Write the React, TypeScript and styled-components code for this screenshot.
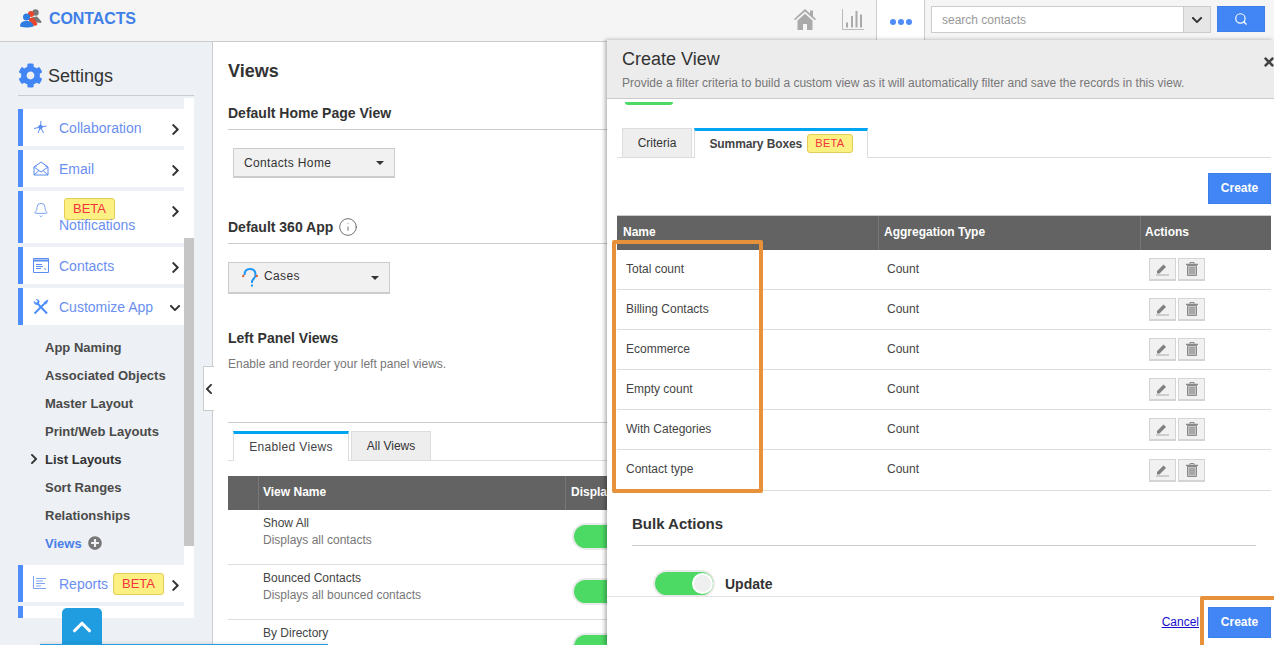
import React from 'react'
import styled, { createGlobalStyle } from 'styled-components'
import { FaChevronDown, FaChevronLeft, FaChevronRight, FaCog, FaPlusCircle, FaTimes } from 'react-icons/fa'
import { Bell, ChevronUp, Info, Search } from 'lucide-react'

const GlobalStyle = createGlobalStyle`
  html, body {
    margin: 0;
    padding: 0;
    background: #fff;
    overflow: hidden;
  }
  * {
    box-sizing: border-box;
  }
`

const Page = styled.div`
  position: relative;
  width: 1274px;
  height: 645px;
  overflow: hidden;
  display: flex;
  flex-direction: column;
  font-family: 'Liberation Sans', Arial, sans-serif;
  color: #333;
`

const TopBar = styled.header`
  height: 42px;
  flex: none;
  display: flex;
  align-items: stretch;
  background: #f5f5f5;
  border-bottom: 1px solid #ccc;
`

const Brand = styled.div`
  display: flex;
  align-items: center;
  gap: 7px;
  padding: 0 0 4px 20px;
  font-size: 16px;
  font-weight: 700;
  letter-spacing: -0.1px;
  color: #3f7fe8;
`

const TopTools = styled.div`
  margin-left: auto;
  display: flex;
  align-items: stretch;
`

const TopIcon = styled.div<{ $width: number }>`
  width: ${(p) => p.$width}px;
  display: flex;
  align-items: center;
  justify-content: center;
  padding-bottom: 2px;
`

const DotsTab = styled.div`
  width: 49px;
  height: 41px;
  background: #fff;
  border-left: 1px solid #ccc;
  border-right: 1px solid #ccc;
  display: flex;
  align-items: center;
  justify-content: center;
  gap: 2px;
  padding-top: 2px;
`

const Dot = styled.span`
  width: 6px;
  height: 6px;
  border-radius: 50%;
  background: #4d8dfc;
`

const SearchBox = styled.div`
  width: 280px;
  height: 27px;
  margin: 6px 0 0 6px;
  display: flex;
  background: #fff;
  border: 1px solid #ccc;
`

const SearchInput = styled.div`
  flex: 1;
  padding: 1px 0 0 10px;
  line-height: 25px;
  font-size: 12px;
  color: #999;
`

const SearchCaret = styled.div`
  width: 27px;
  background: #e6e6e6;
  border-left: 1px solid #ccc;
  display: flex;
  align-items: center;
  justify-content: center;
  color: #333;
`

const SearchButton = styled.div`
  width: 48px;
  height: 26px;
  margin: 6px 9px 0 6px;
  background: #4285f4;
  border: 1px solid #3f7fe8;
  color: #fff;
  display: flex;
  align-items: center;
  justify-content: center;
`

const Content = styled.div`
  flex: 1;
  display: flex;
  min-height: 0;
`

const Sidebar = styled.aside`
  position: relative;
  width: 213px;
  flex: none;
  background: #edf0f4;
  border-right: 1px solid #ccc;
  padding-left: 18px;
`

const SideTitle = styled.div`
  width: 176px;
  height: 54px;
  padding-top: 21px;
  display: flex;
  align-items: flex-start;
  gap: 5px;
  font-size: 18px;
  line-height: 26px;
  color: #333;
  border-bottom: 1px solid #ccc;
`

const SideScroll = styled.div`
  width: 176px;
  height: 520px;
  margin-top: 2px;
  display: flex;
  overflow: hidden;
`

const SideList = styled.div`
  width: 166px;
  flex: none;
  padding-top: 11px;
  display: flex;
  flex-direction: column;
  gap: 4px;
`

const Track = styled.div`
  width: 10px;
  background: #fff;
  padding-top: 140px;
`

const Thumb = styled.div`
  height: 308px;
  background: #c6c6c6;
`

const SideItem = styled.div<{ $tall?: boolean }>`
  flex: none;
  height: ${(p) => (p.$tall ? '52px' : '37px')};
  background: #fff;
  border-left: 5px solid #4d8dfc;
  padding-left: 10px;
  display: flex;
  align-items: flex-start;
`

const SideIcon = styled.div`
  width: 26px;
  height: 37px;
  flex: none;
  padding-top: 11px;
  color: #5b8cf0;
`

const SideLabel = styled.div`
  width: 110px;
  height: 37px;
  flex: none;
  padding-top: 1px;
  font-size: 14px;
  color: #6a8ff0;
  white-space: nowrap;
  display: flex;
  align-items: center;
`

const NotifyLabel = styled.div`
  width: 110px;
  flex: none;
  font-size: 14px;
  line-height: 11px;
  color: #6a8ff0;
  padding-top: 7px;
  display: flex;
  flex-direction: column;
  align-items: flex-start;
`

const SideArrow = styled.div`
  flex: none;
  padding-top: 14px;
  color: #333;
  line-height: 0;
`

const Beta = styled.span<{ $small?: boolean }>`
  display: inline-block;
  flex: none;
  height: ${(p) => (p.$small ? '19px' : '22px')};
  padding: 0 ${(p) => (p.$small ? '7px' : '8px')};
  margin-left: 5px;
  line-height: ${(p) => (p.$small ? '17px' : '20px')};
  font-size: ${(p) => (p.$small ? '11px' : '13px')};
  font-weight: 400;
  color: #f5333f;
  background: #fdf082;
  border: 1px solid #e3cd55;
  border-radius: 3px;
`

const SubList = styled.div`
  flex: none;
  margin: 4px 0;
`

const SubItem = styled.div<{ $active?: boolean; $current?: boolean }>`
  position: relative;
  height: 28px;
  padding-left: 27px;
  display: flex;
  align-items: center;
  gap: 6px;
  font-size: 13px;
  font-weight: 700;
  color: ${(p) => (p.$active ? '#4a7fe8' : p.$current ? '#333' : '#4a4a4a')};
`

const SubMarker = styled.span`
  position: absolute;
  left: 10px;
  top: 8px;
  line-height: 0;
  color: #333;
`

const CollapseHandle = styled.div`
  position: absolute;
  top: 324px;
  right: -2px;
  width: 11px;
  height: 45px;
  background: #fff;
  border: 1px solid #ccc;
  border-right: none;
  display: flex;
  align-items: center;
  justify-content: center;
  color: #333;
`

const UpButton = styled.div`
  position: absolute;
  left: 62px;
  top: 608px;
  width: 40px;
  height: 37px;
  background: #1f9de0;
  border-radius: 5px 5px 0 0;
  color: #fff;
  display: flex;
  align-items: center;
  justify-content: center;
`

const BottomLine = styled.div`
  position: absolute;
  left: 40px;
  top: 644px;
  width: 288px;
  height: 1px;
  background: #1f9de0;
  box-shadow: 0 -1px 3px rgba(0, 0, 0, 0.2);
`

const Main = styled.main`
  flex: 1;
  min-width: 0;
  padding-left: 15px;
`

const ViewsTitle = styled.h1`
  margin: 18px 0 0;
  font-size: 18px;
  line-height: 22px;
  font-weight: 700;
  color: #333;
`

const SectionHead = styled.h2<{ $top: number }>`
  margin: ${(p) => p.$top}px 0 0;
  padding-bottom: 5px;
  display: flex;
  align-items: center;
  gap: 5px;
  font-size: 14px;
  line-height: 22px;
  font-weight: 700;
  color: #333;
  border-bottom: 1px solid #ccc;
`

const Select = styled.div<{ $left?: number; $tall?: boolean }>`
  width: 162px;
  height: ${(p) => (p.$tall ? '32px' : '30px')};
  margin: 18px 0 0 ${(p) => p.$left ?? 0}px;
  padding: 0 10px;
  display: flex;
  align-items: center;
  gap: 6px;
  font-size: 12px;
  letter-spacing: 0.35px;
  background: #f1f1f1;
  border: 1px solid #ccc;
  border-bottom-width: 2px;
  color: #333;
`

const SelectIcon = styled.span`
  margin-left: 3px;
  line-height: 0;
`

const SelectText = styled.span<{ $raised?: boolean }>`
  padding-bottom: ${(p) => (p.$raised ? '3px' : '0')};
`

const Caret = styled.span`
  margin-left: auto;
  width: 0;
  height: 0;
  border-left: 4px solid transparent;
  border-right: 4px solid transparent;
  border-top: 4px solid #333;
`

const PlainHead = styled.h2`
  margin: 33px 0 0;
  font-size: 14px;
  line-height: 22px;
  font-weight: 700;
  color: #333;
`

const Hint = styled.p`
  margin: 7px 0 0;
  font-size: 12px;
  line-height: 16px;
  color: #777;
`

const MainTabsBlock = styled.div`
  margin-top: 50px;
  padding-top: 8px;
  border-top: 1px solid #ccc;
`

const Tabs = styled.div`
  height: 30px;
  padding-left: 5px;
  display: flex;
  align-items: flex-start;
  gap: 2px;
  border-bottom: 1px solid #ddd;
`

const Tab = styled.div<{ $width: number; $active?: boolean }>`
  width: ${(p) => p.$width}px;
  height: 30px;
  display: flex;
  align-items: center;
  justify-content: center;
  font-size: 12px;
  background: ${(p) => (p.$active ? '#fff' : '#eee')};
  color: ${(p) => (p.$active ? '#444' : '#333')};
  letter-spacing: ${(p) => (p.$active ? '0.35px' : '0')};
  border: 1px solid #ddd;
  border-top: ${(p) => (p.$active ? '3px solid #00a5f2' : '1px solid #ddd')};
  border-bottom: ${(p) => (p.$active ? 'none' : '1px solid #ddd')};
  padding-bottom: ${(p) => (p.$active ? '2px' : '0')};
`

const TabStrong = styled.b`
  letter-spacing: -0.1px;
`

const ViewsHeader = styled.div`
  margin-top: 15px;
  height: 34px;
  display: grid;
  grid-template-columns: 30px 307px 1fr;
  background: #636363;
`

const HeadCell = styled.div<{ $pad?: number }>`
  padding-left: ${(p) => p.$pad ?? 4}px;
  line-height: 32px;
  font-size: 12px;
  font-weight: 700;
  color: #fff;
  border-left: 1px solid #777;
  white-space: nowrap;
  &:first-child {
    border-left: none;
    padding-left: 6px;
  }
`

const ViewRow = styled.div`
  height: 55px;
  display: grid;
  grid-template-columns: 30px 307px 1fr;
  border-bottom: 1px solid #ddd;
`

const ViewText = styled.div`
  grid-column: 2;
  padding: 5px 0 0 5px;
  font-size: 12px;
  line-height: 17px;
  color: #444;
`

const ViewSub = styled.div`
  color: #777;
`

const ToggleCell = styled.div`
  padding: 15px 0 0 9px;
`

const ToggleTrack = styled.div`
  position: relative;
  width: 58px;
  height: 23px;
  border-radius: 12px;
  background: #4cd964;
  box-shadow: 0 0 0 2px #eaeaea;
`

const ToggleKnob = styled.span`
  position: absolute;
  right: 0;
  top: 1px;
  width: 21px;
  height: 21px;
  border-radius: 50%;
  background: #efefef;
  border: 2px solid #fff;
`

const Drawer = styled.section`
  position: absolute;
  left: 607px;
  top: 40px;
  width: 667px;
  height: 605px;
  display: flex;
  flex-direction: column;
  background: #fff;
  box-shadow: -2px 0 4px rgba(0, 0, 0, 0.3);
`

const DrawerHead = styled.div`
  position: relative;
  height: 59px;
  flex: none;
  padding: 8px 0 0 15px;
  background: #ececec;
  border-bottom: 1px solid #ccc;
`

const DrawerTitle = styled.div`
  font-size: 18px;
  line-height: 22px;
  color: #333;
`

const DrawerHint = styled.div`
  margin-top: 5px;
  font-size: 12px;
  line-height: 16px;
  color: #777;
`

const CloseIcon = styled.div`
  position: absolute;
  right: -2px;
  top: 15px;
  color: #444;
  line-height: 0;
`

const DrawerBody = styled.div`
  flex: 1;
  min-height: 0;
  overflow: hidden;
  padding: 0 3px 0 10px;
`

const ToggleSliver = styled.div`
  width: 48px;
  height: 3px;
  margin: 3px 0 0 8px;
  background: #4cd964;
  border-radius: 0 0 12px 12px;
`

const DrawerTabs = styled.div`
  margin-top: 23px;
`

const BlueButton = styled.div`
  width: 63px;
  height: 31px;
  padding-bottom: 2px;
  display: flex;
  align-items: center;
  justify-content: center;
  font-size: 12px;
  font-weight: 700;
  color: #fff;
  background: #4285f4;
  border: 1px solid #3f7fe8;
`

const CreateRow = styled.div`
  margin-top: 15px;
  display: flex;
  justify-content: flex-end;
`

const SummaryTable = styled.div`
  margin-top: 11px;
  border-bottom: 1px solid #ddd;
`

const SummaryHeader = styled.div`
  height: 35px;
  display: grid;
  grid-template-columns: 261px 262px 1fr;
  background: #636363;
  border-top: 1px solid #ccc;
`

const SummaryRow = styled.div`
  height: 40px;
  display: grid;
  grid-template-columns: 261px 262px 1fr;
  align-items: center;
  font-size: 12px;
  color: #444;
  border-bottom: 1px solid #ddd;
  &:last-child {
    border-bottom: none;
  }
`

const NameCell = styled.div`
  padding: 0 0 2px 9px;
`

const Actions = styled.div`
  display: flex;
  gap: 2px;
  padding-left: 9px;
`

const ActionButton = styled.div`
  width: 27px;
  height: 23px;
  display: flex;
  align-items: center;
  justify-content: center;
  background: #f1f1f1;
  border: 1px solid #d4d4d4;
  border-bottom-width: 2px;
  color: #888;
`

const BulkHead = styled.h3`
  margin: 23px 15px 0;
  padding-bottom: 11px;
  font-size: 15px;
  line-height: 20px;
  font-weight: 700;
  color: #333;
  border-bottom: 1px solid #ccc;
`

const BulkRow = styled.div`
  margin: 26px 0 0 38px;
  display: flex;
  align-items: center;
  gap: 12px;
  font-size: 14px;
  font-weight: 700;
  color: #333;
`

const DrawerFoot = styled.div`
  height: 49px;
  flex: none;
  padding: 10px 3px 0 0;
  display: flex;
  align-items: flex-start;
  justify-content: flex-end;
  gap: 9px;
  background: #fff;
  border-top: 1px solid #e2e2e2;
`

const CancelLink = styled.a`
  margin-top: 7px;
  font-size: 12px;
  line-height: 16px;
  color: #1a0dcc;
  text-decoration: underline;
`

const Highlight = styled.div<{ $x: number; $y: number; $w: number; $h: number }>`
  position: absolute;
  left: ${(p) => p.$x}px;
  top: ${(p) => p.$y}px;
  width: ${(p) => p.$w}px;
  height: ${(p) => p.$h}px;
  border: 4px solid #e7923a;
  border-radius: 2px;
  pointer-events: none;
`

const LogoIcon = () => (
  <svg width="22" height="19" viewBox="0 0 22 19">
    <circle cx="15.500" cy="3.500" r="3.200" fill="#777" />
    <path d="M11 8.500l6-1 4.500 5-.5 1.500-4-.5z" fill="#777" />
    <circle cx="11" cy="5" r="3" fill="#e8452c" />
    <path d="M8 9h6l3.500 6-1 1.500-5 .5z" fill="#e8452c" />
    <circle cx="6.500" cy="8" r="3.500" fill="#2f7de1" />
    <path d="M0 17.500c0-4 2.500-5.500 6.500-5.500s6.500 1.500 7 5.500q-6.500 2-13.500 0z" fill="#2f7de1" />
  </svg>
)

const HomeIcon = () => (
  <svg width="22" height="21" viewBox="0 0 22 21" fill="#aaa">
    <path d="M11 0l5 4.500V1.500h3v5.800l3 2.700-1 1.200L11 2.500 1 11.200 0 10z" />
    <path d="M3.500 11.500L11 4.800l7.500 6.700V21h-5.500v-6h-4v6H3.500z" />
  </svg>
)

const ChartIcon = () => (
  <svg width="22" height="21" viewBox="0 0 22 21" fill="none">
    <path d="M.5 0v20.500H22" stroke="#bbb" />
    <path d="M5 13.500v5M10 7v11.500M14.500 2v16.500M19 5.500v13" stroke="#aaa" strokeWidth="2" />
  </svg>
)

const CollabIcon = () => (
  <svg width="15" height="15" viewBox="0 0 15 15" fill="none" stroke="currentColor">
    <circle cx="7.500" cy="7" r="1.800" fill="currentColor" />
    <path d="M7.500 7L8 1M7.500 7l6-1M7.500 7l3 6M7.500 7L1 8.500M7.500 7L5 13" />
  </svg>
)

const MailIcon = () => (
  <svg width="16" height="15" viewBox="0 0 16 15" fill="none" stroke="currentColor">
    <path d="M1 6l7-5 7 5v8H1zM1 6l7 5 7-5M1 14l5-4.500M15 14l-5-4.500M3 4.500V6M13 4.500V6" />
  </svg>
)

const WindowIcon = () => (
  <svg width="16" height="15" viewBox="0 0 16 15" fill="none" stroke="currentColor">
    <path d="M.5.500h15v14H.5z" />
    <path d="M.5 2.500h15" strokeWidth="2" />
    <path d="M3 6.500h6M3 8.500h7M3 10.500h5M12 10v2" />
  </svg>
)

const ToolsIcon = () => (
  <svg width="16" height="16" viewBox="0 0 16 16" fill="none" stroke="#4d8dfc">
    <path d="M1.500 14.500L10.500 5.500" strokeWidth="2" />
    <path d="M10 6l1.500-3L15 1l-1.500 3.500z" fill="#4d8dfc" strokeWidth="0.800" />
    <path d="M4 4l10 10.500" strokeWidth="2" />
    <path d="M1.200 2.200L3 4l1.500-.5L5 2 3.200.5C5 0 7 1.500 6 4L4.500 5.500C2.500 6 .8 4.500 1.200 2.200z" fill="#4d8dfc" strokeWidth="0.500" />
  </svg>
)

const ReportIcon = () => (
  <svg width="15" height="14" viewBox="0 0 15 14" fill="none" stroke="#7ea4f0">
    <path d="M.5 0v12.500H13M3 2.500h10M3 5h7M3 7.500h9M3 10h5" />
  </svg>
)

const EarIcon = () => (
  <svg width="16" height="19" viewBox="0 0 16 19" fill="none">
    <path d="M2.500 7C2.500 2.800 5 1 8 1s5.500 2 5.500 6c0 3-3 4-3.500 6.500V15" stroke="#2196f3" strokeWidth="2" />
    <path d="M10 16.500v2" stroke="#2196f3" strokeWidth="2" />
    <circle cx="1.200" cy="8" r="1.200" fill="#e8652c" />
    <circle cx="14.800" cy="8" r="1.200" fill="#e8652c" />
  </svg>
)

const PencilIcon = () => (
  <svg width="15" height="14" viewBox="0 0 15 14">
    <path d="M2 9l6.500-6.500L11 5l-6.500 6.500H2z" fill="#808080" />
    <path d="M1 13h13" stroke="#aaa" />
  </svg>
)

const TrashIcon = () => (
  <svg width="12" height="14" viewBox="0 0 12 14" fill="none" stroke="#8a8a8a">
    <path d="M0 2.500h12" strokeWidth="1.500" />
    <path d="M4 2V.500h4V2" />
    <path d="M1.500 3.500h9V13.500h-9z" fill="#c4c4c4" />
    <path d="M4 5v7M6 5v7M8 5v7" />
  </svg>
)

const Toggle = () => (
  <ToggleTrack>
    <ToggleKnob />
  </ToggleTrack>
)

const Arrow = () => (
  <SideArrow>
    <FaChevronRight size={13} />
  </SideArrow>
)

const subItems = [
  'App Naming',
  'Associated Objects',
  'Master Layout',
  'Print/Web Layouts',
  'List Layouts',
  'Sort Ranges',
  'Relationships',
]

const views = [
  { name: 'Show All', desc: 'Displays all contacts' },
  { name: 'Bounced Contacts', desc: 'Displays all bounced contacts' },
  { name: 'By Directory' },
]

const summaryRows = [
  'Total count',
  'Billing Contacts',
  'Ecommerce',
  'Empty count',
  'With Categories',
  'Contact type',
]

const App: React.FC = () => {
  return (
    <Page>
      <GlobalStyle />
      <TopBar>
        <Brand>
          <LogoIcon />
          CONTACTS
        </Brand>
        <TopTools>
          <TopIcon $width={50}>
            <HomeIcon />
          </TopIcon>
          <TopIcon $width={46}>
            <ChartIcon />
          </TopIcon>
          <DotsTab>
            <Dot />
            <Dot />
            <Dot />
          </DotsTab>
          <SearchBox>
            <SearchInput>search contacts</SearchInput>
            <SearchCaret>
              <FaChevronDown size={12} />
            </SearchCaret>
          </SearchBox>
          <SearchButton>
            <Search size={14} />
          </SearchButton>
        </TopTools>
      </TopBar>

      <Content>
        <Sidebar>
          <SideTitle>
            <FaCog size={25} color="#4285f4" />
            Settings
          </SideTitle>
          <SideScroll>
            <SideList>
              <SideItem>
                <SideIcon><CollabIcon /></SideIcon>
                <SideLabel>Collaboration</SideLabel>
                <Arrow />
              </SideItem>
              <SideItem>
                <SideIcon><MailIcon /></SideIcon>
                <SideLabel>Email</SideLabel>
                <Arrow />
              </SideItem>
              <SideItem $tall>
                <SideIcon><Bell size={16} strokeWidth={1.2} /></SideIcon>
                <NotifyLabel>
                  <Beta>BETA</Beta>
                  Notifications
                </NotifyLabel>
                <Arrow />
              </SideItem>
              <SideItem>
                <SideIcon><WindowIcon /></SideIcon>
                <SideLabel>Contacts</SideLabel>
                <Arrow />
              </SideItem>
              <SideItem>
                <SideIcon><ToolsIcon /></SideIcon>
                <SideLabel>Customize App</SideLabel>
                <SideArrow>
                  <FaChevronDown size={12} />
                </SideArrow>
              </SideItem>
              <SubList>
                {subItems.map((item) => (
                  <SubItem key={item} $current={item === 'List Layouts'}>
                    {item === 'List Layouts' && (
                      <SubMarker>
                        <FaChevronRight size={12} />
                      </SubMarker>
                    )}
                    {item}
                  </SubItem>
                ))}
                <SubItem $active>
                  Views
                  <FaPlusCircle size={14} color="#777" />
                </SubItem>
              </SubList>
              <SideItem>
                <SideIcon><ReportIcon /></SideIcon>
                <SideLabel>
                  Reports
                  <Beta>BETA</Beta>
                </SideLabel>
                <Arrow />
              </SideItem>
              <SideItem />
            </SideList>
            <Track>
              <Thumb />
            </Track>
          </SideScroll>
          <CollapseHandle>
            <FaChevronLeft size={12} />
          </CollapseHandle>
        </Sidebar>

        <Main>
          <ViewsTitle>Views</ViewsTitle>
          <SectionHead $top={20}>Default Home Page View</SectionHead>
          <Select $left={5}>
            Contacts Home
            <Caret />
          </Select>
          <SectionHead $top={38}>
            Default 360 App
            <Info size={20} strokeWidth={1} color="#555" />
          </SectionHead>
          <Select $tall>
            <SelectIcon><EarIcon /></SelectIcon>
            <SelectText $raised>Cases</SelectText>
            <Caret />
          </Select>
          <PlainHead>Left Panel Views</PlainHead>
          <Hint>Enable and reorder your left panel views.</Hint>
          <MainTabsBlock>
            <Tabs>
              <Tab $width={116} $active>Enabled Views</Tab>
              <Tab $width={80}>All Views</Tab>
            </Tabs>
          </MainTabsBlock>
          <ViewsHeader>
            <HeadCell />
            <HeadCell>View Name</HeadCell>
            <HeadCell $pad={5}>Display</HeadCell>
          </ViewsHeader>
          {views.map((view) => (
            <ViewRow key={view.name}>
              <ViewText>
                {view.name}
                {view.desc && <ViewSub>{view.desc}</ViewSub>}
              </ViewText>
              <ToggleCell>
                <Toggle />
              </ToggleCell>
            </ViewRow>
          ))}
        </Main>
      </Content>

      <UpButton>
        <ChevronUp size={30} strokeWidth={2.5} />
      </UpButton>
      <BottomLine />

      <Drawer>
        <DrawerHead>
          <DrawerTitle>Create View</DrawerTitle>
          <DrawerHint>
            Provide a filter criteria to build a custom view as it will automatically filter and save the records in this view.
          </DrawerHint>
          <CloseIcon>
            <FaTimes size={14} />
          </CloseIcon>
        </DrawerHead>
        <DrawerBody>
          <ToggleSliver />
          <DrawerTabs>
            <Tabs>
              <Tab $width={70}>Criteria</Tab>
              <Tab $width={174} $active>
                <TabStrong>Summary Boxes</TabStrong>
                <Beta $small>BETA</Beta>
              </Tab>
            </Tabs>
          </DrawerTabs>
          <CreateRow>
            <BlueButton>Create</BlueButton>
          </CreateRow>
          <SummaryTable>
            <SummaryHeader>
              <HeadCell>Name</HeadCell>
              <HeadCell $pad={5}>Aggregation Type</HeadCell>
              <HeadCell>Actions</HeadCell>
            </SummaryHeader>
            {summaryRows.map((name) => (
              <SummaryRow key={name}>
                <NameCell>{name}</NameCell>
                <NameCell>Count</NameCell>
                <Actions>
                  <ActionButton><PencilIcon /></ActionButton>
                  <ActionButton><TrashIcon /></ActionButton>
                </Actions>
              </SummaryRow>
            ))}
          </SummaryTable>
          <BulkHead>Bulk Actions</BulkHead>
          <BulkRow>
            <Toggle />
            Update
          </BulkRow>
        </DrawerBody>
        <DrawerFoot>
          <CancelLink href="#">Cancel</CancelLink>
          <BlueButton>Create</BlueButton>
        </DrawerFoot>
      </Drawer>

      <Highlight $x={612} $y={240} $w={151} $h={253} />
      <Highlight $x={1200} $y={596} $w={90} $h={70} />
    </Page>
  )
}

export default App
